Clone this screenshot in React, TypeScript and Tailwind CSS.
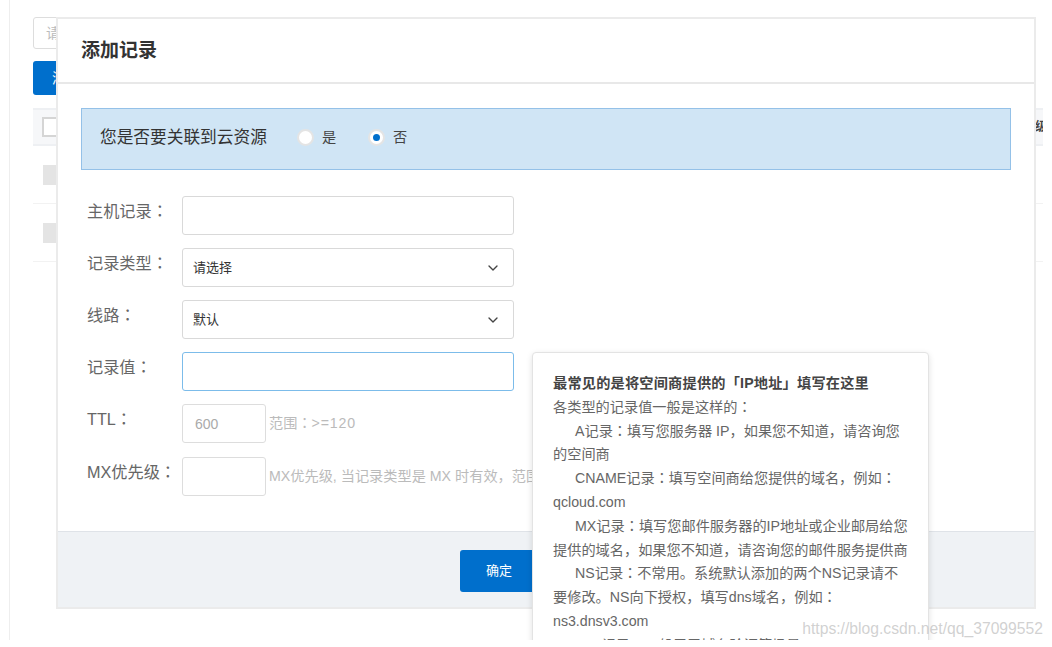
import { ChevronDown } from "lucide-react";

const FONT = "font-['Liberation_Sans','Noto_Sans_CJK_SC',sans-serif]";

// the reference has its full-width colons centred in the cell
const Colon = () => <span className="font-['Liberation_Sans','Noto_Sans_CJK_TC',sans-serif]">：</span>;

const Radio = ({ label, checked }: { label: string; checked?: boolean }) => (
  <label className="flex items-center gap-2 text-[14.2px] text-[#444]">
    <span className="flex h-[17px] w-[17px] items-center justify-center rounded-full border-2 border-[#e4e4e4] bg-white">
      {checked && <span className="h-[7px] w-[7px] rounded-full bg-[#006fcc]" />}
    </span>
    {label}
  </label>
);

const Row = ({ label, children, last }: { label: string; children: React.ReactNode; last?: boolean }) => (
  <div className={`flex ${last ? "mt-[14px]" : "mt-[13px] first:mt-0"}`}>
    <div className="w-[101px] shrink-0 pl-[6px] pt-[3px] text-[16.2px] leading-[24px] text-[#666] whitespace-nowrap">
      {label}
      <Colon />
    </div>
    {children}
  </div>
);

const SelectBox = ({ value }: { value: string }) => (
  <div className="flex h-[39px] w-[332px] items-center justify-between rounded-[3px] border border-[#d9d9d9] bg-white pl-[10px] pr-[12px] text-[13px] text-[#333]">
    {value}
    <ChevronDown size={16} strokeWidth={2} className="text-[#444]" />
  </div>
);

const Tip = ({ children, indent }: { children: React.ReactNode; indent?: boolean }) => (
  <p className={indent ? "indent-[22px]" : ""}>{children}</p>
);

const BackgroundPage = () => (
  <div className="ml-[9px] h-full border-l border-[#eeeeee] pl-[23px] pt-[17px]">
    <div className="h-[32px] w-[200px] rounded-[3px] border border-[#dddddd] pl-[12px] text-sm leading-[30px] text-[#bbb]">请输入</div>
    <div className="mt-[12px] h-[34px] w-[100px] rounded-[3px] bg-[#006fcc] pl-[19px] text-sm leading-[34px] text-white">添加记录</div>
    <div className="mt-[13px] flex h-[38px] items-center justify-between border-y-2 border-[#eef0f3] bg-[#f6f7f9] pl-[9px]">
      <span className="h-[20px] w-[20px] border-2 border-[#d5d5d5] bg-white" />
      <span className="w-[8px] overflow-hidden whitespace-nowrap text-xs font-bold text-[#444]">级</span>
    </div>
    <div className="flex h-[58px] items-center border-b border-[#f2f2f2] pl-[10px]">
      <span className="h-[20px] w-[20px] bg-[#e4e4e4]" />
    </div>
    <div className="flex h-[58px] items-center border-b border-[#f2f2f2] pl-[10px]">
      <span className="h-[20px] w-[20px] bg-[#e4e4e4]" />
    </div>
  </div>
);

export default function App() {
  return (
    <div className="h-[647px] w-[1052px] bg-white">
      <div className={`relative h-[640px] w-[1043px] overflow-hidden bg-white ${FONT}`}>
        <BackgroundPage />

        {/* dialog */}
        <div className="absolute left-[56px] top-[17px] flex h-[592px] w-[980px] flex-col border-2 border-[#ebebeb] bg-white">
          <div className="flex h-[65px] shrink-0 items-center border-b-2 border-[#e8e8e8] pl-[23px] pt-[2px] text-[19px] font-bold text-[#333]">添加记录</div>

          <div className="flex-1 px-[23px] pt-[24px]">
            <div className="flex h-[62px] items-center gap-[30px] border border-[#94c1e8] bg-[#d0e5f5] pb-[3px] pl-[18px] text-[16.7px] text-[#333]">
              <span>您是否要关联到云资源</span>
              <div className="flex gap-[32px]">
                <Radio label="是" />
                <Radio label="否" checked />
              </div>
            </div>

            <div className="mt-[26px]">
              <Row label="主机记录">
                <input className="h-[39px] w-[332px] rounded-[3px] border border-[#d9d9d9] bg-white" />
              </Row>
              <Row label="记录类型">
                <SelectBox value="请选择" />
              </Row>
              <Row label="线路">
                <SelectBox value="默认" />
              </Row>
              <Row label="记录值">
                <input className="h-[39px] w-[332px] rounded-[3px] border border-[#7cbcea] bg-white" />
              </Row>
              <Row label="TTL">
                <div className="flex h-[39px] w-[84px] items-center rounded-[3px] border border-[#dddddd] pl-[12px] text-sm text-[#aaa]">600</div>
                <span className="ml-[3px] self-center text-[14.2px] text-[#bbb]">
                  范围<Colon />
                  <span className="tracking-[0.8px]">&gt;=120</span>
                </span>
              </Row>
              <Row label="MX优先级" last>
                <div className="h-[39px] w-[84px] rounded-[3px] border border-[#dddddd]" />
                <span className="ml-[3px] self-center whitespace-nowrap text-[14.2px] text-[#bbb]">MX优先级, 当记录类型是 MX 时有效，范围1-50</span>
              </Row>
            </div>
          </div>

          <div className="flex h-[76px] shrink-0 justify-center gap-2 border-t border-[#dfe3e8] bg-[#eff2f5] pr-[8px] pt-[18px]">
            <button className="h-[42px] w-[78px] rounded-[3px] bg-[#006fcc] text-[13px] text-white">确定</button>
            <button className="h-[42px] w-[78px] rounded-[3px] border border-[#d9d9d9] bg-white text-[13px] text-[#333]">取消</button>
          </div>
        </div>

        {/* tooltip over the dialog */}
        <div className="absolute left-[532px] top-[352px] w-[397px] rounded-[4px] border border-[#e3e3e3] bg-white px-[20px] pb-[20px] pt-[19px] text-[14.2px] leading-[23.8px] text-[#666] shadow-[0_2px_6px_rgba(0,0,0,0.12)]">
          <p className="font-bold tracking-[0.2px] text-[#444]">最常见的是将空间商提供的「IP地址」填写在这里</p>
          <Tip>各类型的记录值一般是这样的<Colon /></Tip>
          <Tip indent>A记录<Colon />填写您服务器 IP，如果您不知道，请咨询您的空间商</Tip>
          <Tip indent>CNAME记录<Colon />填写空间商给您提供的域名，例如<Colon />qcloud.com</Tip>
          <Tip indent>MX记录<Colon />填写您邮件服务器的IP地址或企业邮局给您提供的域名，如果您不知道，请咨询您的邮件服务提供商</Tip>
          <Tip indent>NS记录<Colon />不常用。系统默认添加的两个NS记录请不要修改。NS向下授权，填写dns域名，例如<Colon />ns3.dnsv3.com</Tip>
          <Tip indent>TXT记录<Colon />一般用于域名验证等场景</Tip>
        </div>

        {/* watermark */}
        <span className="absolute bottom-[-1px] right-0 whitespace-nowrap text-[15.7px] text-[#bdbdbd]/70">https://blog.csdn.net/qq_37099552</span>
      </div>
    </div>
  );
}
